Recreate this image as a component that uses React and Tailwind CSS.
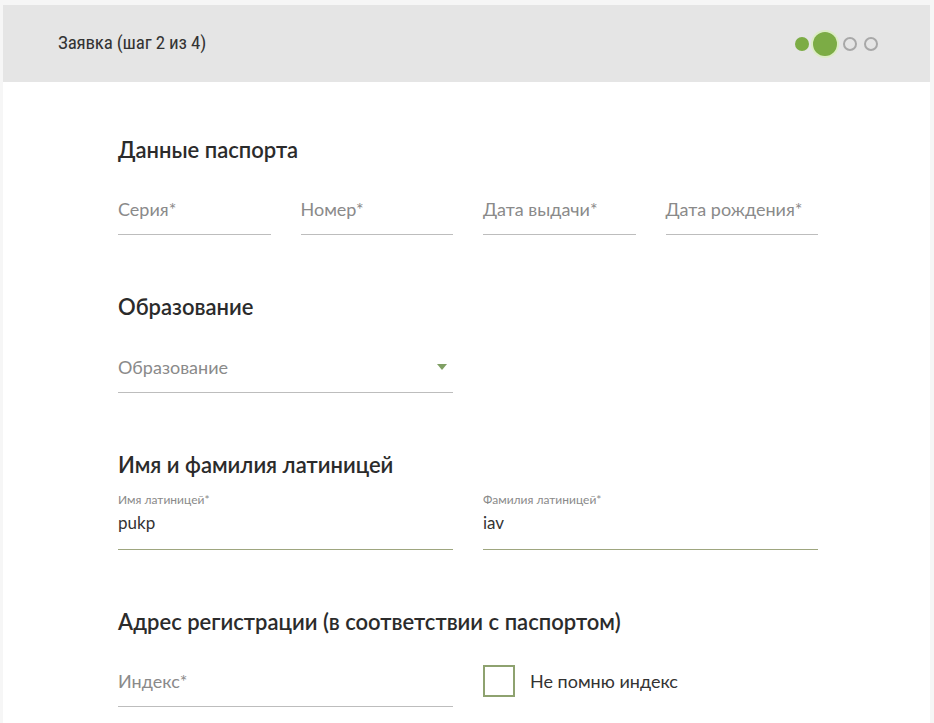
import React from "react";

function Field({ label, className = "" }) {
  return (
    <div className={`flex flex-col ${className}`}>
      <div className="h-[50px] flex items-center text-[18px] text-[#8a8a8a]">{label}</div>
      <div className="h-px bg-[#bdbdbd]" />
    </div>
  );
}

function FilledField({ label, value }) {
  return (
    <div className="flex flex-col">
      <div className="text-[12px] leading-[14px] text-[#8a8a8a] mt-[-2px]">{label}</div>
      <div className="text-[17px] leading-[22px] text-[#333] mt-[5px] pb-[15px]">{value}</div>
      <div className="h-px bg-[#9ea67f]" />
    </div>
  );
}

function StepDots() {
  return (
    <div className="flex items-center gap-[4px]">
      <span className="w-[14px] h-[14px] rounded-full bg-[#7cac45]" />
      <span className="w-[24px] h-[24px] rounded-full bg-[#7cac45] ring-2 ring-[#dcecc5]" />
      <span className="w-[14px] h-[14px] rounded-full border-2 border-[#a8a8a8] ml-[2px]" />
      <span className="w-[14px] h-[14px] rounded-full border-2 border-[#a8a8a8] ml-[3px]" />
    </div>
  );
}

export default function App() {
  return (
    <div
      className="min-h-screen bg-[#f6f6f6] pt-[5px] pl-[3px] pr-[4px]"
      style={{ fontFamily: "Lato, 'Open Sans', sans-serif" }}
    >
      <div className="bg-white min-h-[720px]">
        {/* Header */}
        <div className="h-[77px] bg-[#e5e5e5] flex items-center justify-between pl-[55px] pr-[52px]">
          <div
            className="text-[19px] text-[#333] tracking-[-0.2px]"
            style={{ fontFamily: "'Liberation Sans Narrow', 'Roboto Condensed', Roboto, sans-serif" }}
          >
            Заявка (шаг 2 из 4)
          </div>
          <StepDots />
        </div>

        <div className="pl-[115px] w-[815px] pt-[54px]">
          {/* Passport */}
          <h2 className="text-[22px] font-semibold text-[#2b2b2b] leading-[28px]">Данные паспорта</h2>
          <div className="grid grid-cols-4 gap-x-[30px] mt-[20px]">
            <Field label="Серия*" />
            <Field label="Номер*" />
            <Field label="Дата выдачи*" />
            <Field label="Дата рождения*" />
          </div>

          {/* Education */}
          <h2 className="text-[22px] font-semibold text-[#2b2b2b] leading-[28px] mt-[58px]">Образование</h2>
          <div className="grid grid-cols-2 gap-x-[30px] mt-[21px]">
            <div className="flex flex-col">
              <div className="h-[50px] flex items-center justify-between text-[18px] text-[#8a8a8a] pr-[6px]">
                <span>Образование</span>
                <span className="w-0 h-0 border-l-[5px] border-r-[5px] border-t-[6px] border-l-transparent border-r-transparent border-t-[#7f9f63]" />
              </div>
              <div className="h-px bg-[#bdbdbd]" />
            </div>
          </div>

          {/* Latin name */}
          <h2 className="text-[22px] font-semibold text-[#2b2b2b] leading-[28px] mt-[58px]">
            Имя и фамилия латиницей
          </h2>
          <div className="grid grid-cols-2 gap-x-[30px] mt-[16px]">
            <FilledField label="Имя латиницей*" value="pukp" />
            <FilledField label="Фамилия латиницей*" value="iav" />
          </div>

          {/* Address */}
          <h2 className="text-[22px] font-semibold text-[#2b2b2b] leading-[28px] mt-[58px]">
            Адрес регистрации (в соответствии с паспортом)
          </h2>
          <div className="grid grid-cols-2 gap-x-[30px] mt-[20px]">
            <Field label="Индекс*" />
            <div className="flex items-center h-[50px] gap-[15px]">
              <span className="w-[32px] h-[32px] border-2 border-[#8ea26f] bg-white" />
              <span className="text-[18px] text-[#333]">Не помню индекс</span>
            </div>
          </div>
        </div>
      </div>
    </div>
  );
}
